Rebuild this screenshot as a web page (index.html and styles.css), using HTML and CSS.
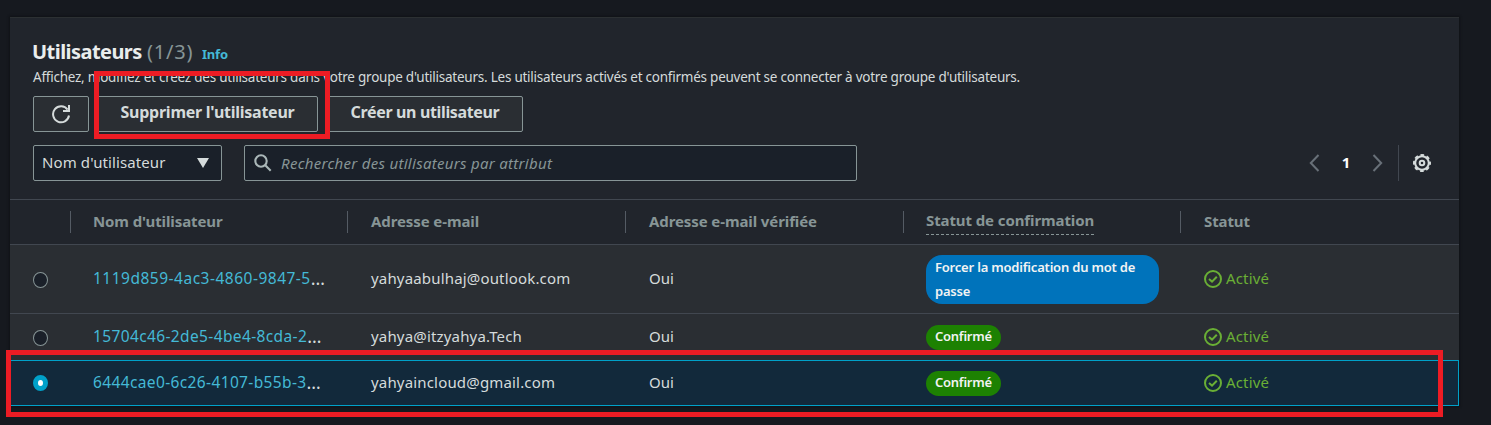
FILE: index.html
```html
<!DOCTYPE html>
<html lang="fr">
<head>
<meta charset="utf-8">
<title>Utilisateurs</title>
<link rel="stylesheet" href="styles.css">
</head>
<body>
<svg class="defs" width="0" height="0" aria-hidden="true">
  <symbol id="check" viewBox="0 0 18 18"><g fill="none" stroke="currentColor" stroke-width="2"><circle cx="9" cy="9" r="8"/><path d="M5 9l3 2.6 4.8-4.9"/></g></symbol>
</svg>
<main class="card">
  <header class="head">
    <div class="title-row"><h1>Utilisateurs</h1><span class="count">(1/3)</span><a class="info">Info</a></div>
    <p class="desc">Affichez, modifiez et créez des utilisateurs dans votre groupe d'utilisateurs. Les utilisateurs activés et confirmés peuvent se connecter à votre groupe d'utilisateurs.</p>
    <div class="actions">
      <button class="btn refresh"><svg width="20" height="20" viewBox="0 0 20 20" fill="none" stroke="currentColor" stroke-width="2"><path d="M18 11.5A8 8 0 1 1 16.6 5.6"/><path d="M18 1v6h-6"/></svg></button>
      <button class="btn delete"><span>Supprimer l'utilisateur</span></button>
      <button class="btn create"><span>Créer un utilisateur</span></button>
    </div>
    <div class="filters">
      <div class="select"><span>Nom d'utilisateur</span><svg width="12" height="10" viewBox="0 0 12 10"><path d="M0 0h12L6 10z" fill="currentColor"/></svg></div>
      <div class="search"><svg width="18" height="18" viewBox="0 0 18 18" fill="none" stroke="currentColor" stroke-width="2.1"><circle cx="7" cy="7" r="5.7"/><path d="M11 11l5.7 5.7"/></svg><span>Rechercher des utilisateurs par attribut</span></div>
      <div class="pager">
        <svg class="arrow" width="11" height="18" viewBox="0 0 11 18" fill="none" stroke="currentColor" stroke-width="2"><path d="M9.5 1L1.8 9l7.7 8"/></svg>
        <b>1</b>
        <svg class="arrow" width="11" height="18" viewBox="0 0 11 18" fill="none" stroke="currentColor" stroke-width="2"><path d="M1.5 1l7.7 8-7.7 8"/></svg>
      </div>
      <div class="settings"><svg width="18" height="18" viewBox="0 0 18 18" fill="none" stroke="currentColor" stroke-width="2"><circle cx="9" cy="9" r="6.8"/><circle cx="9" cy="9" r="8" stroke-dasharray="3.6 2.683" stroke-dashoffset="1.8"/><circle cx="9" cy="9" r="2.3"/></svg></div>
    </div>
  </header>
  <section class="table">
    <div class="row thead">
      <div class="c0"></div>
      <div class="cell name"><span>Nom d'utilisateur</span></div>
      <div class="cell"><span>Adresse e-mail</span></div>
      <div class="cell"><span>Adresse e-mail vérifiée</span></div>
      <div class="cell confirm"><span class="dashed">Statut de confirmation</span></div>
      <div class="cell"><span>Statut</span></div>
    </div>
    <div class="row r1">
      <div class="c0"><i class="radio"></i></div>
      <div class="cell name id"><a class="id-wide">1119d859-4ac3-4860-9847-5</a><span>…</span></div>
      <div class="cell mail">yahyaabulhaj@outlook.com</div>
      <div class="cell">Oui</div>
      <div class="cell confirm"><span class="badge blue">Forcer la modification du mot de passe</span></div>
      <div class="cell status"><svg width="18" height="18"><use href="#check"/></svg><span>Activé</span></div>
    </div>
    <div class="row r2">
      <div class="c0"><i class="radio"></i></div>
      <div class="cell name id"><a>15704c46-2de5-4be4-8cda-2</a><span>…</span></div>
      <div class="cell mail">yahya@itzyahya.Tech</div>
      <div class="cell">Oui</div>
      <div class="cell confirm"><span class="badge">Confirmé</span></div>
      <div class="cell status"><svg width="18" height="18"><use href="#check"/></svg><span>Activé</span></div>
    </div>
    <div class="row r3">
      <div class="c0"><i class="radio on"></i></div>
      <div class="cell name id"><a>6444cae0-6c26-4107-b55b-3</a><span>…</span></div>
      <div class="cell mail">yahyaincloud@gmail.com</div>
      <div class="cell">Oui</div>
      <div class="cell confirm"><span class="badge">Confirmé</span></div>
      <div class="cell status"><svg width="18" height="18"><use href="#check"/></svg><span>Activé</span></div>
    </div>
  </section>
</main>
<div class="mark mark-button"></div>
<div class="mark mark-row"></div>
</body>
</html>
```
FILE: styles.css
```css
* { box-sizing: border-box; }
body { margin: 0; padding: 17px 32px 0 10px; height: 425px; overflow: hidden; background: #16191f; color: #d5dbdb; font: 15px/22px "Noto Sans", "Open Sans", sans-serif; position: relative; }
.defs { position: absolute; }
svg { display: block; flex: none; }
.card { width: 1449px; height: 389px; background: #21252c; box-shadow: 0 0 2px 1px #101216; }
.head { height: 183px; padding: 20px 23px 0 23px; border-top: 1px solid #2c3033; border-bottom: 1px solid #414750; }
.title-row { display: flex; align-items: baseline; height: 28px; line-height: 27px; white-space: nowrap; }
h1 { margin: 0 0 0 -1px; width: 115px; font-size: 20px; letter-spacing: -.55px; color: #eaeded; }
.count { width: 55px; font-size: 20px; letter-spacing: .8px; color: #879596; }
.info { font-size: 13px; font-weight: 700; color: #44b9d6; letter-spacing: -.2px; }
.desc { margin: 0; height: 30px; line-height: 22px; font-size: 13.5px; letter-spacing: -.24px; white-space: nowrap; }
.actions { display: flex; }
.btn { height: 36px; padding: 0 0 4px; border: 1px solid #879596; border-radius: 2px; background: #2a2e33; color: #d5dbdb; font: 700 16px/20px "Noto Sans", sans-serif; display: flex; align-items: center; justify-content: center; white-space: nowrap; }
.refresh { width: 56px; padding: 0; }
.delete { width: 222px; margin-left: 7px; padding-left: 1px; letter-spacing: -.25px; }
.create { width: 196px; margin-left: 9px; letter-spacing: -.35px; }
.filters { display: flex; margin-top: 13px; height: 36px; align-items: stretch; }
.select { width: 189px; height: 36px; border: 1px solid #879596; border-radius: 2px; background: #1a2029; padding: 0 12px 2px 8px; display: flex; align-items: center; justify-content: space-between; letter-spacing: .1px; }
.select svg { margin-top: 2px; }
.search { width: 613px; margin-left: 22px; border: 1px solid #879596; border-radius: 2px; background: #1a2029; padding: 0 9px; display: flex; align-items: center; gap: 9px; color: #879596; font-style: italic; letter-spacing: .29px; white-space: nowrap; }
.search svg { color: #aab7b8; }
.pager { display: flex; align-items: center; justify-content: space-between; width: 74px; margin-left: auto; color: #fff; }
.pager b { padding-bottom: 2px; }
.arrow { color: #687078; }
.settings { margin-left: 15px; width: 43px; padding-left: 14px; margin-right: -5px; border-left: 1px solid #414750; display: flex; align-items: center; }
.row { display: grid; grid-template-columns: 60px 277px 278px 278px 277px 279px; align-items: center; white-space: nowrap; }
.cell { padding: 0 0 2px 24px; }
.thead { height: 45px; border-bottom: 1px solid #414750; color: #879596; font-weight: 700; letter-spacing: -.1px; }
.thead .cell { height: 22px; border-left: 1px solid #545b64; padding: 0 0 0 23px; line-height: 21px; }
.row .name { padding-left: 23px; }
.row .confirm { padding-left: 23px; padding-bottom: 0; }
.thead .name, .thead .confirm { padding-left: 22px; }
.dashed { display: inline-block; height: 25px; border-bottom: 1px dashed #879596; position: relative; top: -1px; }
.c0 { padding-left: 23px; }
.radio { display: block; width: 15px; height: 16px; border: 1px solid #879596; border-radius: 50%; background: #1a2029; position: relative; top: 1px; }
.on { border: 5px solid #00a1c9; background: #fff; top: 0; }
.r1, .r2 { background: #2a2e33; }
.r1 { height: 69px; border-bottom: 1px solid #414750; }
.r2 { height: 46px; }
.r3 { height: 46px; background: #12293b; box-shadow: inset 0 0 0 1px #00a1c9; }
.id { display: flex; }
.id a { color: #44b9d6; font-size: 15.5px; letter-spacing: .37px; }
.id .id-wide { letter-spacing: .5px; }
.id span { font-size: 18px; }
.mail { letter-spacing: .17px; }
.badge { display: inline-block; max-width: 233px; padding: 0 9px 2px; border-radius: 16px; background: #1d8102; color: #f2f3f3; font-size: 13px; font-weight: 600; line-height: 23px; letter-spacing: -.25px; white-space: normal; vertical-align: middle; }
.blue { background: #0073bb; line-height: 24px; width: 233px; padding: 0 9px 1px; letter-spacing: -.2px; }
.status { display: flex; align-items: center; gap: 4px; padding-bottom: 0; color: #6aaf35; }
.status span { padding-bottom: 2px; letter-spacing: .15px; }
.mark { position: absolute; border: 5px solid #ed1c24; }
.mark-button { left: 94px; top: 71px; width: 236px; height: 68px; }
.mark-row { left: 6px; top: 350px; width: 1437px; height: 67px; }
```
